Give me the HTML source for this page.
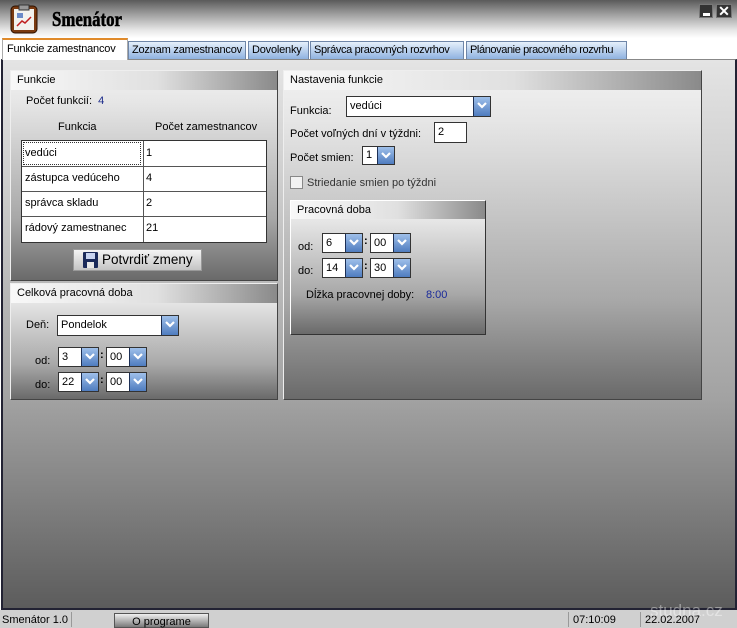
<!DOCTYPE html>
<html><head><meta charset="utf-8"><style>
*{margin:0;padding:0;box-sizing:border-box}
body{width:737px;height:628px;position:relative;overflow:hidden;font-family:"Liberation Sans",sans-serif;font-size:11px;color:#000;background:#fff}
.a{position:absolute}
.t{position:absolute;white-space:nowrap}
.panel{position:absolute;border:1px solid #444;border-top-color:#eee;border-left-color:#eee;background:linear-gradient(#f2f2f2,#e6e6e6 15%,#a8a8a8 70%,#6a6a6a)}
.hdr{position:absolute;left:0;top:0;right:0;height:19px;background:linear-gradient(90deg,#f8f8f8,#e0e0e0 55%,#8a8a8a);padding:3px 0 0 6px}
.cb{position:absolute;background:#fff;border:1px solid #333;padding:3px 0 0 3px}
.btn{position:absolute;right:0;top:0;bottom:0;width:17px;background:linear-gradient(#9fc0ea,#4f7cbf);border-left:1px solid #1c2f55}
.btn svg{position:absolute;left:3px;top:5px}
.tab{position:absolute;top:41px;height:18px;background:linear-gradient(#e6f0fb,#8fb2e0);border:1px solid #6f86a8;border-bottom:none;padding:2px 0 0 3px;white-space:nowrap;overflow:hidden;font-size:11px;letter-spacing:-0.2px}
</style></head><body>
<div class="a" style="left:0;top:0;width:737px;height:38px;background:linear-gradient(#5a5a5a,#9a9a9a 35%,#e8e8e8 80%,#fff)"></div>
<svg class="a" style="left:10px;top:4px" width="28" height="30"><rect x="1" y="2" width="26" height="27" rx="4" fill="#7a3a10" stroke="#2a1000"/><rect x="4" y="5" width="20" height="21" fill="#f2f2ee"/><rect x="9" y="1" width="10" height="5" fill="#999" stroke="#333"/><rect x="7" y="9" width="6" height="5" fill="#6a8ac8"/><path d="M7 22 L12 17 L15 19 L21 13" stroke="#c02020" stroke-width="1.5" fill="none"/></svg>
<div class="t" style="left:52px;top:7px;font-family:'Liberation Serif',serif;font-weight:bold;font-size:21px;transform:scaleX(0.8);transform-origin:left;-webkit-text-stroke:0.6px #000">Smenátor</div>
<div class="a" style="left:699px;top:4px;width:14px;height:14px;background:#333;border:1px solid #777"><div class="a" style="left:3px;top:8px;width:7px;height:3px;background:#fff"></div></div>
<div class="a" style="left:716px;top:4px;width:16px;height:14px;background:#333;border:1px solid #777;color:#fff;font-weight:bold;font-size:14px;line-height:12px;text-align:center">✕</div>
<div class="tab" style="left:128px;width:118px">Zoznam zamestnancov</div>
<div class="tab" style="left:248px;width:61px">Dovolenky</div>
<div class="tab" style="left:310px;width:154px;letter-spacing:-0.35px">Správca pracovných rozvrhov</div>
<div class="tab" style="left:466px;width:161px;letter-spacing:-0.4px">Plánovanie pracovného rozvrhu</div>
<div class="a" style="left:2px;top:38px;width:126px;height:22px;background:#fff;border:1px solid #aaa;border-top:2px solid #e08a2a;border-bottom:none;padding:3px 0 0 4px;white-space:nowrap;z-index:2;letter-spacing:-0.2px">Funkcie zamestnancov</div>
<div class="a" style="left:1px;top:59px;width:736px;height:551px;border-left:2px solid #223;border-right:2px solid #223;border-top:1px solid #888;border-bottom:2px solid #223;background:linear-gradient(#e4e4e4,#d0d0d0 20%,#a2a2a2 62%,#5c5c5c)"></div>
<div class="panel" style="left:10px;top:70px;width:268px;height:211px"><div class="hdr">Funkcie</div></div>
<div class="t" style="left:26px;top:95px">Počet funkcií:&nbsp; <span style="color:#1a2a8a">4</span></div>
<div class="t" style="left:58px;top:121px">Funkcia</div>
<div class="t" style="left:155px;top:121px">Počet zamestnancov</div>
<div class="a" style="left:21px;top:140px;width:246px;height:103px;background:#fff;border:1px solid #333"></div>
<div class="a" style="left:143px;top:141px;width:1px;height:101px;background:#555"></div>
<div class="a" style="left:22px;top:166px;width:244px;height:1px;background:#555"></div>
<div class="a" style="left:22px;top:191px;width:244px;height:1px;background:#555"></div>
<div class="a" style="left:22px;top:216px;width:244px;height:1px;background:#555"></div>
<div class="a" style="left:23px;top:142px;width:118px;height:23px;border:1px dotted #333"></div>
<div class="t" style="left:25px;top:147px">vedúci</div><div class="t" style="left:146px;top:147px">1</div>
<div class="t" style="left:25px;top:172px">zástupca vedúceho</div><div class="t" style="left:146px;top:172px">4</div>
<div class="t" style="left:25px;top:197px">správca skladu</div><div class="t" style="left:146px;top:197px">2</div>
<div class="t" style="left:25px;top:222px">rádový zamestnanec</div><div class="t" style="left:146px;top:222px">21</div>
<div class="a" style="left:73px;top:249px;width:129px;height:22px;background:linear-gradient(#f4f4f4,#c4c4c4);border:1px solid #999"></div>
<svg class="a" style="left:83px;top:252px" width="15" height="16"><rect width="15" height="16" rx="1" fill="#1a2a5a"/><rect x="3" y="1" width="9" height="6" fill="#c8d4f0"/><rect x="4" y="10" width="7" height="6" fill="#e8e8e8"/></svg>
<div class="t" style="left:102px;top:252px;font-size:13.5px">Potvrdiť zmeny</div>
<div class="panel" style="left:10px;top:283px;width:268px;height:117px"><div class="hdr">Celková pracovná doba</div></div>
<div class="t" style="left:26px;top:319px">Deň:</div>
<div class="cb" style="left:57px;top:315px;width:122px;height:21px">Pondelok<div class="btn"><svg width="10" height="8"><path d="M1 1 L5 5 L9 1" stroke="#fff" stroke-width="2.2" fill="none"/></svg></div></div>
<div class="t" style="left:35px;top:355px">od:</div>
<div class="t" style="left:35px;top:379px">do:</div>
<div class="cb" style="left:58px;top:347px;width:41px;height:20px">3<div class="btn"><svg width="10" height="8"><path d="M1 1 L5 5 L9 1" stroke="#fff" stroke-width="2.2" fill="none"/></svg></div></div>
<div class="t" style="left:100px;top:349px;font-weight:bold">:</div>
<div class="cb" style="left:106px;top:347px;width:41px;height:20px">00<div class="btn"><svg width="10" height="8"><path d="M1 1 L5 5 L9 1" stroke="#fff" stroke-width="2.2" fill="none"/></svg></div></div>
<div class="cb" style="left:58px;top:372px;width:41px;height:20px">22<div class="btn"><svg width="10" height="8"><path d="M1 1 L5 5 L9 1" stroke="#fff" stroke-width="2.2" fill="none"/></svg></div></div>
<div class="t" style="left:100px;top:374px;font-weight:bold">:</div>
<div class="cb" style="left:106px;top:372px;width:41px;height:20px">00<div class="btn"><svg width="10" height="8"><path d="M1 1 L5 5 L9 1" stroke="#fff" stroke-width="2.2" fill="none"/></svg></div></div>
<div class="panel" style="left:283px;top:70px;width:419px;height:330px"><div class="hdr">Nastavenia funkcie</div></div>
<div class="t" style="left:290px;top:105px">Funkcia:</div>
<div class="cb" style="left:346px;top:96px;width:145px;height:21px">vedúci<div class="btn"><svg width="10" height="8"><path d="M1 1 L5 5 L9 1" stroke="#fff" stroke-width="2.2" fill="none"/></svg></div></div>
<div class="t" style="left:290px;top:128px">Počet voľných dní v týždni:</div>
<div class="cb" style="left:434px;top:122px;width:33px;height:21px">2</div>
<div class="t" style="left:290px;top:152px">Počet smien:</div>
<div class="cb" style="left:362px;top:146px;width:33px;height:19px;padding-top:2px">1<div class="btn"><svg width="10" height="8"><path d="M1 1 L5 5 L9 1" stroke="#fff" stroke-width="2.2" fill="none"/></svg></div></div>
<div class="a" style="left:290px;top:176px;width:13px;height:13px;background:#f2f2f2;border:1px solid #888"></div>
<div class="t" style="left:307px;top:177px;color:#333">Striedanie smien po týždni</div>
<div class="panel" style="left:290px;top:200px;width:196px;height:135px;border-color:#fff #333 #333 #fff"><div class="hdr" style="height:18px">Pracovná doba</div></div>
<div class="t" style="left:298px;top:241px">od:</div>
<div class="t" style="left:298px;top:265px">do:</div>
<div class="cb" style="left:322px;top:233px;width:41px;height:20px">6<div class="btn"><svg width="10" height="8"><path d="M1 1 L5 5 L9 1" stroke="#fff" stroke-width="2.2" fill="none"/></svg></div></div>
<div class="t" style="left:364px;top:235px;font-weight:bold">:</div>
<div class="cb" style="left:370px;top:233px;width:41px;height:20px">00<div class="btn"><svg width="10" height="8"><path d="M1 1 L5 5 L9 1" stroke="#fff" stroke-width="2.2" fill="none"/></svg></div></div>
<div class="cb" style="left:322px;top:258px;width:41px;height:20px">14<div class="btn"><svg width="10" height="8"><path d="M1 1 L5 5 L9 1" stroke="#fff" stroke-width="2.2" fill="none"/></svg></div></div>
<div class="t" style="left:364px;top:260px;font-weight:bold">:</div>
<div class="cb" style="left:370px;top:258px;width:41px;height:20px">30<div class="btn"><svg width="10" height="8"><path d="M1 1 L5 5 L9 1" stroke="#fff" stroke-width="2.2" fill="none"/></svg></div></div>
<div class="t" style="left:306px;top:289px">Dĺžka pracovnej doby:</div>
<div class="t" style="left:426px;top:289px;color:#1a2a9a">8:00</div>
<div class="a" style="left:0;top:610px;width:737px;height:18px;background:#d0d0d0"></div>
<div class="t" style="left:2px;top:614px;font-size:11px">Smenátor 1.0</div>
<div class="a" style="left:71px;top:612px;width:1px;height:15px;background:#999"></div>
<div class="a" style="left:114px;top:613px;width:95px;height:15px;background:linear-gradient(#f0f0f0,#7a7a7a);border:1px solid #555;text-align:center;font-size:11px;padding-top:2px">O programe</div>
<div class="a" style="left:568px;top:612px;width:1px;height:15px;background:#999"></div>
<div class="t" style="left:573px;top:614px;font-size:11px">07:10:09</div>
<div class="a" style="left:640px;top:612px;width:1px;height:15px;background:#999"></div>
<div class="t" style="left:645px;top:614px;font-size:11px">22.02.2007</div>
<div class="t" style="left:650px;top:601px;font-size:17px;color:rgba(255,255,255,0.4)">studna.cz</div>
</body></html>
